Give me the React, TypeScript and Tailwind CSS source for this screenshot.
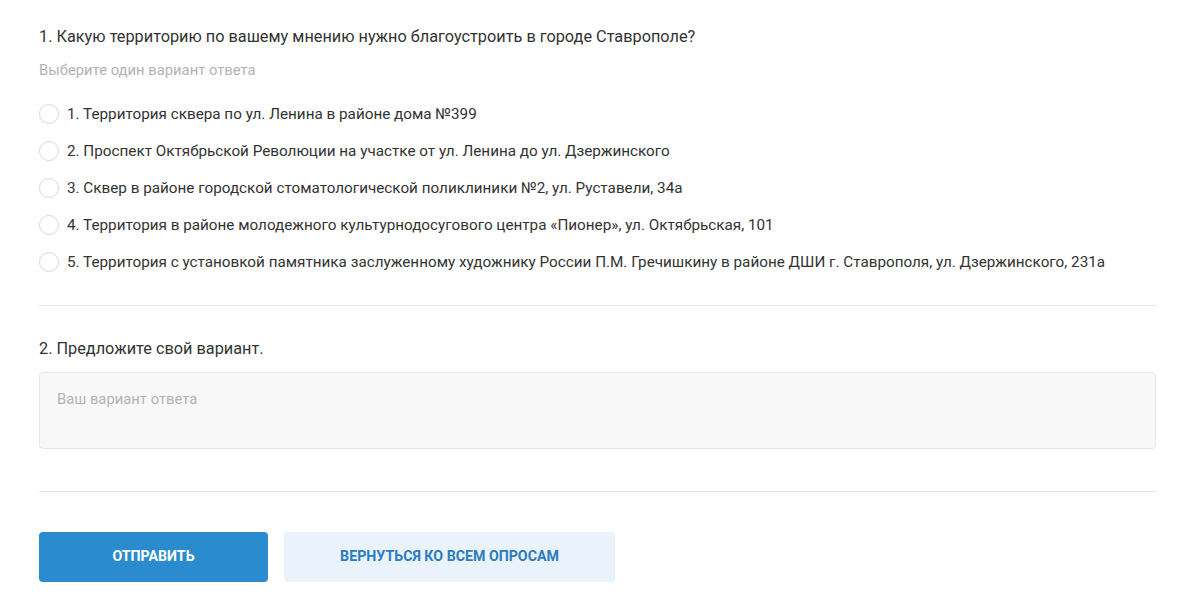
const options = [
  "1. Территория сквера по ул. Ленина в районе дома №399",
  "2. Проспект Октябрьской Революции на участке от ул. Ленина до ул. Дзержинского",
  "3. Сквер в районе городской стоматологической поликлиники №2, ул. Руставели, 34а",
  "4. Территория в районе молодежного культурнодосугового центра «Пионер», ул. Октябрьская, 101",
  "5. Территория с установкой памятника заслуженному художнику России П.М. Гречишкину в районе ДШИ г. Ставрополя, ул. Дзержинского, 231а",
];

export default function App() {
  return (
    <div className="min-h-screen bg-white font-['Roboto',sans-serif] text-[#333]">
      <form className="ml-[39px] w-[1117px] pt-[26px]">
        <section className="border-b border-[#e6e6e6] pb-[32px]">
          <h2 className="text-[16.3px] leading-[22px]">
            1. Какую территорию по вашему мнению нужно благоустроить в городе Ставрополе?
          </h2>
          <p className="mt-[12px] text-[14.8px] leading-[20px] text-[#b3b3b3]">Выберите один вариант ответа</p>
          <ul className="mt-[23px] flex flex-col gap-[15px]">
            {options.map((o) => (
              <li key={o}>
                <label className="flex items-center gap-[8px] text-[15.25px] leading-[22px]">
                  <span className="size-[20px] shrink-0 rounded-full border border-[#d9d9d9] bg-white" />
                  {o}
                </label>
              </li>
            ))}
          </ul>
        </section>

        <section className="border-b border-[#e6e6e6] pt-[32px] pb-[42px]">
          <h2 className="text-[16.3px] leading-[22px]">2. Предложите свой вариант.</h2>
          <textarea
            className="mt-[12px] block h-[77px] w-full resize-none rounded-[4px] border border-[#e6e6e6] bg-[#f8f8f8] px-[17px] py-[17px] text-[14.8px] leading-[18px] placeholder:text-[#b3b3b3] outline-none"
            placeholder="Ваш вариант ответа"
          />
        </section>

        <div className="flex gap-[16px] pt-[40px]">
          <button
            type="button"
            className="h-[50px] w-[229px] rounded-[4px] bg-[#2a8ccf] text-[14.2px] font-bold uppercase text-white"
          >
            Отправить
          </button>
          <button
            type="button"
            className="h-[50px] w-[331px] rounded-[4px] bg-[#eaf3fb] text-[14.2px] font-bold uppercase text-[#2a7cc0]"
          >
            Вернуться ко всем опросам
          </button>
        </div>
      </form>
    </div>
  );
}
